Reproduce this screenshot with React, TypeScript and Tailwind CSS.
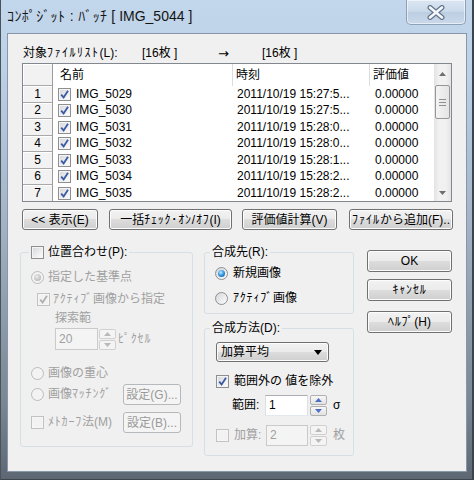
import type { ReactNode } from "react";

const rows = [
  { no: 1, name: "IMG_5029", time: "2011/10/19 15:27:5..." },
  { no: 2, name: "IMG_5030", time: "2011/10/19 15:27:5..." },
  { no: 3, name: "IMG_5031", time: "2011/10/19 15:28:0..." },
  { no: 4, name: "IMG_5032", time: "2011/10/19 15:28:0..." },
  { no: 5, name: "IMG_5033", time: "2011/10/19 15:28:1..." },
  { no: 6, name: "IMG_5034", time: "2011/10/19 15:28:2..." },
  { no: 7, name: "IMG_5035", time: "2011/10/19 15:28:2..." },
];

const btnOn =
  "border-[#707070] bg-[linear-gradient(to_bottom,#f2f2f2_0%,#ebebeb_50%,#dddddd_50%,#cfcfcf_100%)] text-black shadow-[inset_0_0_0_1px_#fcfcfc]";
const btnOff = "border-[#b5b9bc] bg-[#f4f4f4] text-[#9a9a9a]";

function Btn({ children, className = "", disabled }: { children: ReactNode; className?: string; disabled?: boolean }) {
  return (
    <button
      type="button"
      className={`flex shrink-0 items-center justify-center overflow-hidden whitespace-nowrap rounded-[3px] border font-normal leading-none ${disabled ? btnOff : btnOn} ${className}`}
    >
      {children}
    </button>
  );
}

function Check({ checked, disabled }: { checked?: boolean; disabled?: boolean }) {
  return (
    <span
      className={`relative inline-block h-[13px] w-[13px] shrink-0 border ${disabled ? "border-[#c2c2c2] bg-[#f6f6f6]" : "border-[#8e8f8f] bg-[#f4f4f4]"}`}
    >
      <span
        className={`absolute inset-[1px] ${disabled ? "bg-[#f2f2f2]" : "bg-[linear-gradient(135deg,#d6d9de,#fbfbfb)]"}`}
      />
      {checked && (
        <svg viewBox="0 0 11 11" className="absolute left-0 top-0 h-[11px] w-[11px]">
          <path d="M2.2 5.6 L4.6 8.4 L9 1.8" fill="none" stroke={disabled ? "#b0b0b0" : "#3c59a3"} strokeWidth="1.8" />
        </svg>
      )}
    </span>
  );
}

function Radio({ checked, disabled }: { checked?: boolean; disabled?: boolean }) {
  return (
    <span
      className={`inline-flex h-[13px] w-[13px] shrink-0 items-center justify-center rounded-full border ${disabled ? "border-[#bcbcbc] bg-[#f3f3f3]" : "border-[#8e8f8f] bg-[linear-gradient(135deg,#d3d6db,#fdfdfd)]"}`}
    >
      {checked && (
        <span
          className={`h-[7px] w-[7px] rounded-full ${disabled ? "bg-[radial-gradient(circle_at_40%_35%,#ececec,#a9a9a9)]" : "bg-[radial-gradient(circle_at_40%_35%,#c4ecff_0%,#2f95dc_50%,#0d4a89_100%)]"}`}
        />
      )}
    </span>
  );
}

function Spin({ disabled }: { disabled?: boolean }) {
  const fill = disabled ? "#b9b9b9" : "#4f6fc4";
  return (
    <span className="flex h-[21px] w-[17px] shrink-0 flex-col gap-[1px]">
      {[0, 1].map((i) => (
        <span
          key={i}
          className={`flex flex-1 items-center justify-center rounded-[2px] border ${disabled ? "border-[#d0d0d0] bg-[#f4f4f4]" : "border-[#b0b0b0] bg-[linear-gradient(to_bottom,#f8f8f8,#e2e2e2)]"}`}
        >
          <svg viewBox="0 0 7 4" className="h-[4px] w-[7px]">
            <path d={i === 0 ? "M0 4 L3.5 0 L7 4 Z" : "M0 0 L3.5 4 L7 0 Z"} fill={fill} />
          </svg>
        </span>
      ))}
    </span>
  );
}

function Field({ value, disabled, className = "" }: { value: string; disabled?: boolean; className?: string }) {
  return (
    <span
      className={`flex h-full shrink-0 items-center border pl-[3px] ${disabled ? "border-[#cacaca] bg-[#f4f4f4] text-[#a0a0a0]" : "border-[#abadb3] border-x-[#dbdfe6] border-b-[#e3e9ef] bg-white text-black"} ${className}`}
    >
      {value}
    </span>
  );
}

function Tri({ up }: { up?: boolean }) {
  return (
    <svg viewBox="0 0 7 4" className="h-[4px] w-[7px]">
      <path d={up ? "M0 4 L3.5 0 L7 4 Z" : "M0 0 L3.5 4 L7 0 Z"} fill="#6f6f6f" />
    </svg>
  );
}

export default function App() {
  return (
    <div className="flex h-[480px] w-[474px] flex-col bg-[linear-gradient(to_bottom,#c2d6ec_0px,#bcd0e6_70px,#a3b4c6_220px,#7a8794_400px,#5c6773_480px)] px-[7px] pb-[8px] font-['Liberation_Sans','Noto_Sans_CJK_JP',sans-serif] text-[12px] leading-[15px] text-black shadow-[inset_1px_0_0_#4a525b,inset_-2px_0_0_#3d444c,inset_0_-1px_0_#3d444c]">
      {/* title bar */}
      <div className="flex h-[33px] shrink-0 items-start justify-between">
        <div className="mt-[8px] text-[14px] leading-[17px] text-[#141414]">
          <span className="tracking-[0.4px]">ｺﾝﾎﾟｼﾞｯﾄ : ﾊﾞｯﾁ</span> [ IMG_5044 ]
        </div>
        <button
          type="button"
          aria-label="閉じる"
          className="mr-[1px] flex h-[25px] w-[60px] items-center justify-center rounded-b-[5px] border border-t-0 border-[#8ea1b8] bg-[linear-gradient(to_bottom,#dbe6f2,#c9d9ea_50%,#bccee2_50%,#cad9ea)] shadow-[inset_0_0_0_1px_rgba(255,255,255,0.55)]"
        >
          <svg viewBox="0 0 20 15" className="h-[15px] w-[20px]">
            <path d="M4 2.5 L16 12.5 M16 2.5 L4 12.5" stroke="#63748a" strokeWidth="5" strokeLinecap="round" />
            <path d="M4 2.5 L16 12.5 M16 2.5 L4 12.5" stroke="#f4f7fa" strokeWidth="2.6" strokeLinecap="round" />
          </svg>
        </button>
      </div>

      {/* client area */}
      <div className="flex flex-1 flex-col border border-[#8797a9] bg-[#f0f0f0]">
        <div className="ml-[15px] mt-[12px] flex h-[15px] items-center whitespace-nowrap">
          <span className="w-[119px]">
            対象<span className="tracking-[1.5px]">ﾌｧｲﾙﾘｽﾄ</span>(L):
          </span>
          <span className="w-[76px]">[16枚 ]</span>
          <span className="w-[44px] font-['DejaVu_Sans',sans-serif] text-[13px]">→</span>
          <span>[16枚 ]</span>
        </div>

        {/* file list */}
        <div className="ml-[14px] mt-[2px] flex h-[139px] w-[430px] overflow-hidden border border-[#828790] bg-white">
          <div className="flex flex-1 flex-col">
            <div className="flex h-[22px] shrink-0">
              <div className="w-[30px] border-b border-r border-b-[#a9a9a9] border-r-[#9d9d9d] bg-[#f2f2f2] shadow-[inset_1px_1px_0_#ffffff]" />
              <div className="flex w-[180px] items-center border-r border-[#dcdcdc] pl-[7px]">名前</div>
              <div className="flex w-[137px] items-center border-r border-[#dcdcdc] pl-[3px]">時刻</div>
              <div className="flex flex-1 items-center pl-[3px]">評価値</div>
            </div>
            {rows.map((r) => (
              <div key={r.no} className="flex h-[16.5px] shrink-0">
                <div className="flex w-[30px] items-center justify-center border-b border-r border-b-[#a9a9a9] border-r-[#9d9d9d] bg-[#f2f2f2] pt-[1px] shadow-[inset_1px_1px_0_#ffffff]">
                  {r.no}
                </div>
                <div className="flex w-[180px] items-center gap-[5px] pl-[5px]">
                  <Check checked />
                  <span>{r.name}</span>
                </div>
                <div className="flex w-[137px] items-center whitespace-nowrap pl-[4px]">{r.time}</div>
                <div className="flex flex-1 items-center pl-[5px]">0.00000</div>
              </div>
            ))}
          </div>
          {/* scrollbar */}
          <div className="flex w-[17px] shrink-0 flex-col bg-[linear-gradient(to_right,#e3e3e3,#f1f1f1_30%,#f1f1f1_70%,#e3e3e3)]">
            <div className="flex h-[20px] items-center justify-center">
              <Tri up />
            </div>
            <div className="mx-[1px] mt-[1px] flex h-[34px] flex-col items-center justify-center gap-[2px] rounded-[2px] border border-[#979797] bg-[linear-gradient(to_right,#f4f4f4,#e4e4e4)]">
              <span className="h-[1px] w-[7px] bg-[#909090]" />
              <span className="h-[1px] w-[7px] bg-[#909090]" />
              <span className="h-[1px] w-[7px] bg-[#909090]" />
            </div>
            <div className="flex-1" />
            <div className="flex h-[17px] items-center justify-center">
              <Tri />
            </div>
          </div>
        </div>

        {/* list buttons */}
        <div className="ml-[14px] mt-[7px] flex h-[21px]">
          <Btn className="w-[76px]">{"<< 表示(E)"}</Btn>
          <Btn className="ml-[11px] w-[123px]">
            一括<span className="tracking-[0.8px]">ﾁｪｯｸ･ｵﾝ/ｵﾌ</span>(I)
          </Btn>
          <Btn className="ml-[10px] w-[95px]">評価値計算(V)</Btn>
          <Btn className="ml-[12px] w-[104px] justify-start pl-[2px]">
            <span className="tracking-[1px]">ﾌｧｲﾙ</span>から追加(F)..
          </Btn>
        </div>

        {/* lower section */}
        <div className="ml-[12px] mt-[15px] flex items-start">
          {/* alignment group */}
          <fieldset className="w-[173px] rounded-[3px] border border-[#d5dfe5] pb-[13px]">
            <legend className="ml-[8px] px-[2px]">
              <span className="flex h-[15px] items-center gap-[4px]">
                <Check />
                位置合わせ(P):
              </span>
            </legend>
            <div className="ml-[10px] mt-[9px] flex h-[16px] items-center gap-[4px] text-[#a0a0a0]">
              <Radio checked disabled />
              指定した基準点
            </div>
            <div className="ml-[16px] mt-[6px] flex h-[16px] items-center gap-[3px] text-[#a0a0a0]">
              <Check checked disabled />
              <span>
                <span className="tracking-[0.8px]">ｱｸﾃｨﾌﾞ</span>画像から指定
              </span>
            </div>
            <div className="ml-[34px] mt-[4px] flex h-[14px] items-center text-[#a0a0a0]">探索範</div>
            <div className="ml-[34px] mt-[3px] flex h-[22px] items-center text-[#a0a0a0]">
              <Field value="20" disabled className="w-[43px]" />
              <span className="ml-[1px]">
                <Spin disabled />
              </span>
              <span className="ml-[2px] tracking-[0.8px]">ﾋﾟｸｾﾙ</span>
            </div>
            <div className="ml-[10px] mt-[15px] flex h-[16px] items-center gap-[4px] text-[#a0a0a0]">
              <Radio disabled />
              画像の重心
            </div>
            <div className="ml-[10px] mt-[3px] flex h-[21px] items-center text-[#a0a0a0]">
              <Radio disabled />
              <span className="ml-[4px] w-[75px]">
                画像<span className="tracking-[0.8px]">ﾏｯﾁﾝｸﾞ</span>
              </span>
              <Btn disabled className="h-[21px] w-[58px]">
                設定(G)...
              </Btn>
            </div>
            <div className="ml-[10px] mt-[7px] flex h-[21px] items-center text-[#a0a0a0]">
              <Check disabled />
              <span className="ml-[4px] w-[75px]">
                <span className="tracking-[0.8px]">ﾒﾄｶｰﾌ</span>法(M)
              </span>
              <Btn disabled className="h-[21px] w-[58px]">
                設定(B)...
              </Btn>
            </div>
          </fieldset>

          {/* middle column */}
          <div className="ml-[11px] flex w-[150px] flex-col">
            <fieldset className="rounded-[3px] border border-[#d5dfe5] pb-[7px]">
              <legend className="ml-[5px] px-[2px]">
                <span className="flex h-[15px] items-center">合成先(R):</span>
              </legend>
              <div className="ml-[10px] mt-[5px] flex h-[16px] items-center gap-[5px]">
                <Radio checked />
                新規画像
              </div>
              <div className="ml-[10px] mt-[9px] flex h-[16px] items-center gap-[5px]">
                <Radio />
                <span>
                  <span className="tracking-[0.8px]">ｱｸﾃｨﾌﾞ</span>画像
                </span>
              </div>
            </fieldset>

            <fieldset className="mt-[7px] rounded-[3px] border border-[#d5dfe5] pb-[9px]">
              <legend className="ml-[5px] px-[2px]">
                <span className="flex h-[15px] items-center">合成方法(D):</span>
              </legend>
              <div
                className={`ml-[11px] mt-[6px] flex h-[20px] w-[113px] items-center justify-between rounded-[3px] border pl-[4px] pr-[6px] ${btnOn}`}
              >
                <span>加算平均</span>
                <svg viewBox="0 0 8 5" className="h-[5px] w-[8px]">
                  <path d="M0 0 H8 L4 5 Z" fill="#000" />
                </svg>
              </div>
              <div className="ml-[11px] mt-[11px] flex h-[16px] items-center gap-[5px]">
                <Check checked />
                範囲外の 値を除外
              </div>
              <div className="ml-[27px] mt-[6px] flex h-[21px] items-center">
                <span className="w-[33px]">範囲:</span>
                <Field value="1" className="w-[43px]" />
                <span className="ml-[2px]">
                  <Spin />
                </span>
                <span className="ml-[6px]">σ</span>
              </div>
              <div className="ml-[11px] mt-[9px] flex h-[21px] items-center text-[#a0a0a0]">
                <Check disabled />
                <span className="ml-[5px] w-[32px]">加算:</span>
                <Field value="2" disabled className="w-[42px]" />
                <span className="ml-[2px]">
                  <Spin disabled />
                </span>
                <span className="ml-[6px]">枚</span>
              </div>
            </fieldset>
          </div>

          {/* dialog buttons */}
          <div className="ml-[13px] flex w-[85px] flex-col">
            <Btn className="mt-[5px] h-[22px] w-[85px]">OK</Btn>
            <Btn className="mt-[7px] h-[22px] w-[85px]">
              <span className="tracking-[0.8px]">ｷｬﾝｾﾙ</span>
            </Btn>
            <Btn className="mt-[10px] h-[22px] w-[85px]">
              <span className="tracking-[0.8px]">ﾍﾙﾌﾟ</span>(H)
            </Btn>
          </div>
        </div>
      </div>
    </div>
  );
}
